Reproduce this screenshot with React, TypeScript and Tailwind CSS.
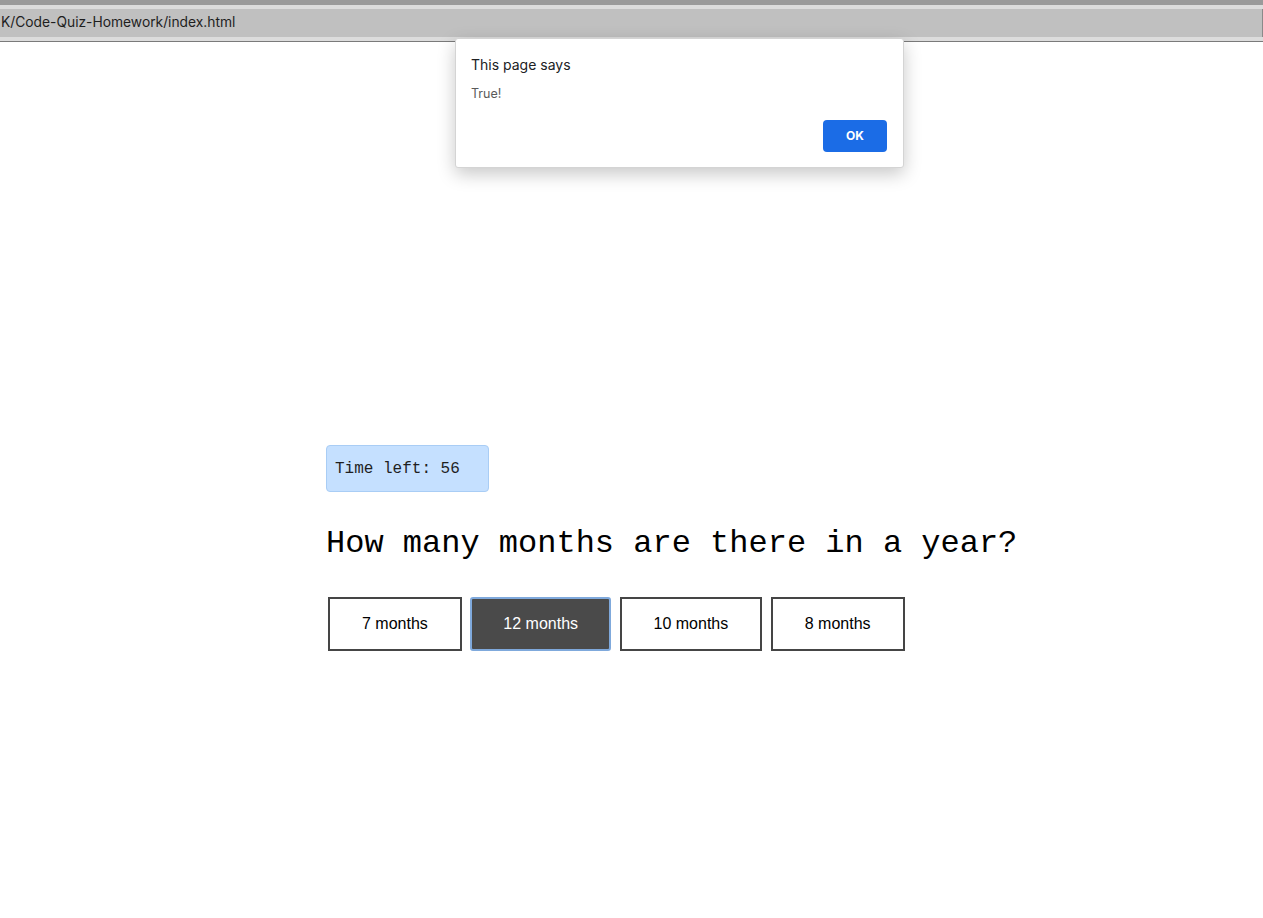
import React from "react";

export default function App() {
  return (
    <div className="relative w-[1263px] h-[918px] bg-white overflow-hidden" style={{ fontFamily: "'Liberation Sans', Arial, sans-serif" }}>
      {/* Top browser strip */}
      <div className="flex flex-col">
        <div className="h-[5px] bg-[#9a9a9a]" />
        <div className="h-[4px] bg-[#dcdcdc]" />
        <div className="h-[28px] bg-[#c0c0c0] flex items-center overflow-hidden border-r border-[#8a8a8a]">
          <span className="text-[13.8px] leading-[18px] -mt-[2px] text-[#1e1e1e] whitespace-nowrap ml-[1px] font-['Inter',sans-serif]">K/Code-Quiz-Homework/index.html</span>
        </div>
        <div className="h-[4px] bg-[#dcdcdc]" />
        <div className="h-[1px] bg-[#7a7a7a]" />
      </div>

      {/* Page content */}
      <div className="pl-[326px] pt-[403px]">
        <div className="w-[163px] h-[47px] rounded-[4px] bg-[#c5e0ff] border border-[#a9cdf5] flex items-center pl-[8px] pt-[1px]">
          <span className="text-[16px] text-[#1f1f1f]" style={{ fontFamily: "'Liberation Mono', 'Courier New', monospace" }}>Time left: 56</span>
        </div>
        <h1 className="mt-[32px] text-[32px] leading-[40px] text-black whitespace-nowrap" style={{ fontFamily: "'Liberation Mono', 'Courier New', monospace" }}>
          How many months are there in a year?
        </h1>
        <div className="mt-[33px] ml-[2px] flex gap-[8.5px]">
          <button className="px-[32px] h-[54px] border-2 border-[#454545] bg-white text-black text-[16px]">7 months</button>
          <button className="px-[31px] h-[54px] border-2 border-[#7fa9dc] rounded-[3px] bg-[#4a4a4a] text-white text-[16px]">12 months</button>
          <button className="px-[32px] h-[54px] border-2 border-[#454545] bg-white text-black text-[16px]">10 months</button>
          <button className="px-[32px] h-[54px] border-2 border-[#454545] bg-white text-black text-[16px]">8 months</button>
        </div>
      </div>

      {/* Alert dialog */}
      <div className="absolute left-[455px] top-[38px] w-[449px] h-[130px] bg-white rounded-[3px] border border-[#d4d4d4] shadow-[0_6px_18px_rgba(0,0,0,0.22)] flex flex-col px-[15px] pt-[16px]" style={{ fontFamily: "'Inter', 'Noto Sans', sans-serif" }}>
        <div className="text-[14px] leading-[20px] text-[#202124]">This page says</div>
        <div className="mt-[11px] text-[12.5px] leading-[16px] text-[#5a5a5a]">True!</div>
        <div className="mt-[18px] flex justify-end pr-[1px]">
          <button className="w-[64px] h-[32px] rounded-[4px] bg-[#1b6ce6] text-white text-[12px] font-bold">OK</button>
        </div>
      </div>
    </div>
  );
}
